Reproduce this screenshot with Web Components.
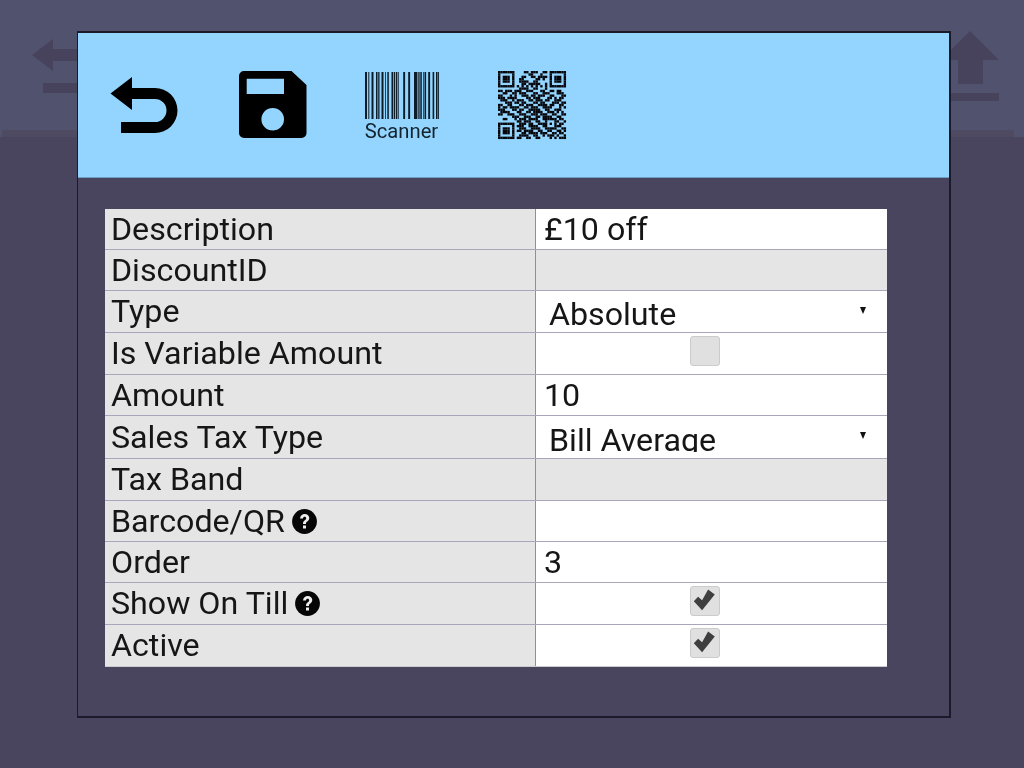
<!DOCTYPE html>
<html><head><meta charset="utf-8"><style>
html,body{margin:0;padding:0;height:100%;overflow:hidden}
body{font-family:Roboto,sans-serif}
</style></head><body>
<template id="t-shell"><style>
:host{display:block;position:relative;width:1024px;height:768px;background:#4a455e;overflow:hidden;filter:blur(.55px)}
.top{height:137px;background:#50526e;box-sizing:border-box;display:flex;align-items:flex-end;padding:0 10px 0 2px;position:relative}
.rule{height:7px;background:#4e4a62;flex:1}
.bg{position:absolute;left:0;top:0}
.modal{position:absolute;left:77px;top:31px;width:874px;height:687px;box-sizing:border-box;border:1px solid #1c1a2a;border-width:2px 2px 2px 1px;background:#4a455e;display:flex;flex-direction:column}
.head{height:144px;background:#93d5fe;border-bottom:1px solid #6f9fc4;flex:none;display:flex}
.body{padding:31px 0 0 27px}
</style>
<div class="top"><div class="rule"></div>
<svg class="bg" width="1024" height="137" fill="#47435c"><path d="M32 55 53 39V49H90V61H53V71Z"/><rect x="43" y="83" width="50" height="10"/><path d="M970 31 999 60H983V84H958V60H941Z"/><rect x="940" y="93" width="59" height="8"/></svg></div>
<div class="modal"><div class="head"><slot name="head"></slot></div><div class="body"><slot></slot></div></div>
</template>

<template id="t-toolbar"><style>
:host{display:block;position:relative;width:872px;height:144px}
svg{position:absolute;left:0;top:0}
.scan{position:absolute;left:276px;top:87px;width:95px;text-align:center;font:20.200px/22px Roboto,sans-serif;color:#14232e}
</style>
<svg id="s" width="872" height="144" viewBox="78 33 872 144"></svg><span class="scan">Scanner</span></template>

<template id="t-table"><style>
:host{display:block;width:782px;background:#fff}
</style><slot></slot></template>

<template id="t-row"><style>
:host{display:grid;grid-template-columns:431px 351px;box-sizing:border-box;border-bottom:1.500px solid #a9a6bb;font:32.200px/1 Roboto,sans-serif;color:#161616;overflow:hidden}
:host([last]){border-bottom:1px solid #ccc}
.l{background:#e5e5e5;border-right:1px solid #8f8ca6;padding-left:6px;display:flex;align-items:center;white-space:pre}
.v{background:#fff;display:flex;align-items:center;padding-left:8px;position:relative;overflow:hidden}
:host([grey]) .v{background:#e5e5e5}
:host([sel]) .v{padding-left:13px;padding-top:5px}
:host([clip]) .txt{display:block;height:26px;overflow:hidden;line-height:28px;margin-top:-1px}
:host([chk]) .v{padding-left:153.500px;align-items:flex-start;padding-top:3px}
.arrow{position:absolute;right:21px;top:15.500px;width:0;height:0;border:3.600px solid transparent;border-top:7px solid #111;border-bottom:0}
.q{display:inline-block;margin-left:7px;flex:none}
.box{width:30px;height:30px;box-sizing:border-box;border:1.500px solid #cbcbcb;border-radius:3px;background:#e0e0e0;display:block}
.box svg{display:block}
</style><div class="l"><span id="lab"></span></div><div class="v"><span class="txt" id="val"></span></div></template>

<script>
const tpl=id=>document.getElementById(id).content.cloneNode(true);
class AppShell extends HTMLElement{constructor(){super();this.attachShadow({mode:'open'}).append(tpl('t-shell'))}}
class ToolBar extends HTMLElement{constructor(){super();const r=this.attachShadow({mode:'open'});r.append(tpl('t-toolbar'));
let h='<path d="M110.500 93.500 132 77V88H155A22.500 22.500 0 0 1 155 133H121V122H155A11.500 11.500 0 0 0 155 99H132V110Z"/>';
h+='<path fill-rule="evenodd" d="M244 71H291.500L306.500 85V133A5 5 0 0 1 301.500 138H244A5 5 0 0 1 239 133V76A5 5 0 0 1 244 71ZM246.700 78.700V94H284V78.700ZM272.700 108A11.300 11.300 0 1 0 272.700 130.600 11.300 11.300 0 1 0 272.700 108Z"/>';
const bars=[[365,2],[368.300,1],[371.500,2],[376,1.500],[378.200,1.300],[381.500,2],[385,.8],[387.300,1.500],[391.500,1.700],[393.900,1.300],[396,1.100],[397.700,1],[403.200,1.900],[408.200,1.900],[414,3.400],[418.300,1.300],[420.300,1.500],[423.300,1.200],[425,1.100],[428.200,1.900],[432.600,1.600],[436,1.100],[437.500,1.400]];
h+='<g fill="#0c1c28">'+bars.map(b=>`<rect x="${b[0]}" y="72" width="${b[1]}" height="47"/>`).join('')+'</g>';
const F=['1111111','1000001','1011101','1011101','1011101','1000001','1111111'];
const mid=['000011011100110','000000110001000','000110011011110','001100000110100','001111001100000','000110111110010','010101010101010'];
const grid=F.map((f,i)=>f+mid[i]+f).concat([
'00000000'+'0111100110001'+'00000000',
'11011101110011100011001101100',
'00110011011100011001110001110',
'11000101001110110111001100011',
'11101111000011011100011010110',
'01110010111001101110110011100',
'00011101101100011011000111011',
'11001100011011100111101100110',
'10110111100110111001111000101',
'11100011011001111100110011100',
'01111000110011011110011101010',
'11001110011100111011100110011',
'00000011100111001101111001100',
'00110001011101111001'+'11111'+'0110',
'00000000'+'110111001100'+'10001'+'1001',
'11111110'+'011101100111'+'10101'+'0110',
'10000010'+'111001111001'+'10001'+'1100',
'10111010'+'011100111100'+'11111'+'0011',
'10111010'+'110111100110'+'01100'+'1101',
'10111010'+'001101111011'+'10011'+'0110',
'10000010'+'011110011001'+'01110'+'1001',
'11111110'+'110011001100'+'00101'+'0111']);
const m=68/29;let q='';grid.forEach((row,y)=>{[...row].forEach((c,x)=>{if(c=='1')q+=`<rect x="${(498+x*m).toFixed(2)}" y="${(71+y*m).toFixed(2)}" width="${(m+.05).toFixed(2)}" height="${(m+.05).toFixed(2)}"/>`})});
h+='<g fill="#06060a">'+q+'</g>';
r.getElementById('s').innerHTML=h;}}
class FormTable extends HTMLElement{constructor(){super();this.attachShadow({mode:'open'}).append(tpl('t-table'))}}
class FormRow extends HTMLElement{constructor(){super();this.attachShadow({mode:'open'}).append(tpl('t-row'))}
connectedCallback(){const r=this.shadowRoot;this.style.height=this.getAttribute('h')+'px';
r.getElementById('lab').textContent=this.getAttribute('label');
const l=r.querySelector('.l'),v=r.querySelector('.v');
r.getElementById('val').textContent=this.getAttribute('value')||'';
if(this.hasAttribute('help')){l.insertAdjacentHTML('beforeend','<svg class="q" width="25" height="25" viewBox="0 0 25 25"><circle cx="12.500" cy="12.500" r="12.400" fill="#060606"/><path d="M8 9.500C8.300 6.500 10.300 5 12.700 5 15.400 5 17.300 6.800 17.300 9 17.300 11 16 12 14.800 12.800 14 13.400 14 14 14 15H11V14.500C11 12.800 11.800 12 13 11.200 13.800 10.600 14.200 10.100 14.200 9.300 14.200 8.400 13.600 7.800 12.600 7.800 11.700 7.800 11.100 8.400 10.900 9.500ZM11 16.500H14V19.500H11Z" fill="#eee"/></svg>')}
if(this.hasAttribute('sel'))v.insertAdjacentHTML('beforeend','<i class="arrow"></i>');
if(this.hasAttribute('chk')){const c=this.getAttribute('chk')=='on';v.innerHTML='<span class="box">'+(c?'<svg width="27" height="27" viewBox="0 0 27 27"><path d="M2.800 14.200 7.100 9.800 11.100 13.200 17.100 2.500 23.800 7.500 11.100 23.200Z" fill="#3f3f3f"/></svg>':'')+'</span>';}
}}
customElements.define('app-shell',AppShell);customElements.define('tool-bar',ToolBar);customElements.define('form-table',FormTable);customElements.define('form-row',FormRow);
</script>
<app-shell>
<tool-bar slot="head"></tool-bar>
<form-table>
<form-row h="41" label="Description" value="£10 off"></form-row>
<form-row h="41" label="DiscountID" grey></form-row>
<form-row h="42" label="Type" value="Absolute" sel></form-row>
<form-row h="42" label="Is Variable Amount" chk="off"></form-row>
<form-row h="41" label="Amount" value="10"></form-row>
<form-row h="43" label="Sales Tax Type" value="Bill Average" sel clip></form-row>
<form-row h="42" label="Tax Band" grey></form-row>
<form-row h="41" label="Barcode/QR" help></form-row>
<form-row h="41" label="Order" value="3"></form-row>
<form-row h="42" label="Show On Till" help chk="on"></form-row>
<form-row h="42" label="Active" chk="on" last></form-row>
</form-table>
</app-shell>
</body></html>
